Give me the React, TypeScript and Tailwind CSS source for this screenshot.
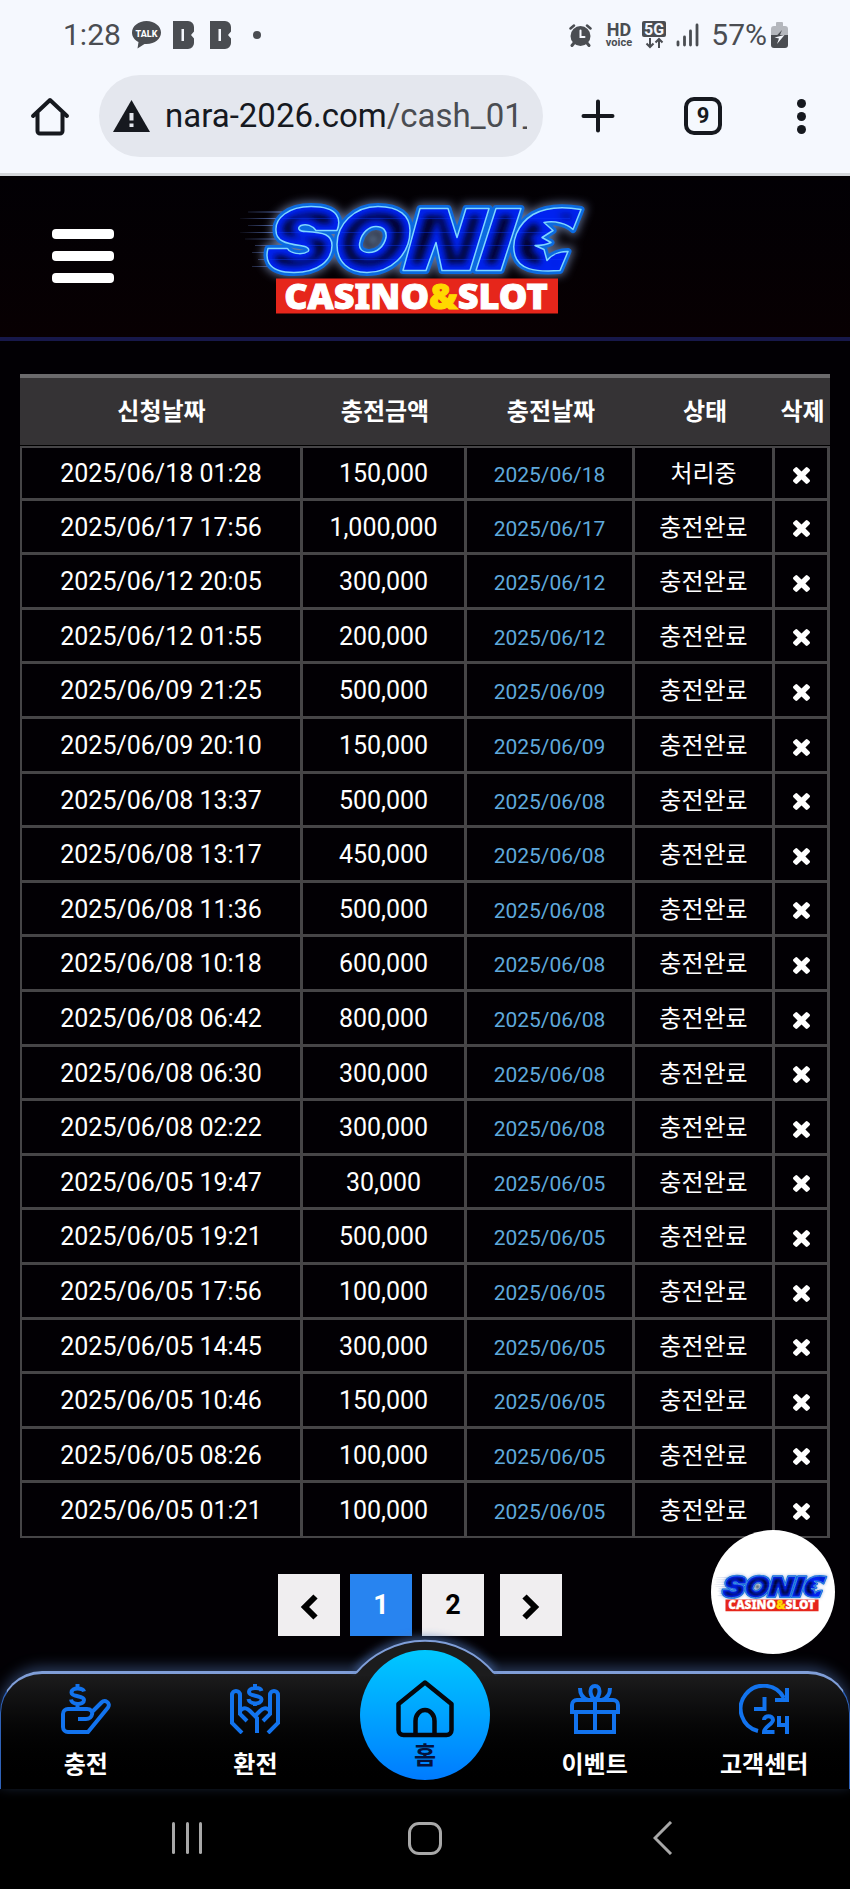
import React from 'react';

type Deposit = {
  requested: string;
  amount: string;
  paid: string;
  status: string;
};

const done = '충전완료';

const deposits: Deposit[] = [
  { requested: '2025/06/18 01:28', amount: '150,000', paid: '2025/06/18', status: '처리중' },
  { requested: '2025/06/17 17:56', amount: '1,000,000', paid: '2025/06/17', status: done },
  { requested: '2025/06/12 20:05', amount: '300,000', paid: '2025/06/12', status: done },
  { requested: '2025/06/12 01:55', amount: '200,000', paid: '2025/06/12', status: done },
  { requested: '2025/06/09 21:25', amount: '500,000', paid: '2025/06/09', status: done },
  { requested: '2025/06/09 20:10', amount: '150,000', paid: '2025/06/09', status: done },
  { requested: '2025/06/08 13:37', amount: '500,000', paid: '2025/06/08', status: done },
  { requested: '2025/06/08 13:17', amount: '450,000', paid: '2025/06/08', status: done },
  { requested: '2025/06/08 11:36', amount: '500,000', paid: '2025/06/08', status: done },
  { requested: '2025/06/08 10:18', amount: '600,000', paid: '2025/06/08', status: done },
  { requested: '2025/06/08 06:42', amount: '800,000', paid: '2025/06/08', status: done },
  { requested: '2025/06/08 06:30', amount: '300,000', paid: '2025/06/08', status: done },
  { requested: '2025/06/08 02:22', amount: '300,000', paid: '2025/06/08', status: done },
  { requested: '2025/06/05 19:47', amount: '30,000', paid: '2025/06/05', status: done },
  { requested: '2025/06/05 19:21', amount: '500,000', paid: '2025/06/05', status: done },
  { requested: '2025/06/05 17:56', amount: '100,000', paid: '2025/06/05', status: done },
  { requested: '2025/06/05 14:45', amount: '300,000', paid: '2025/06/05', status: done },
  { requested: '2025/06/05 10:46', amount: '150,000', paid: '2025/06/05', status: done },
  { requested: '2025/06/05 08:26', amount: '100,000', paid: '2025/06/05', status: done },
  { requested: '2025/06/05 01:21', amount: '100,000', paid: '2025/06/05', status: done },
];

const StatusBar: React.FC = () => (
  <div className="flex h-[70px] items-center justify-between pl-[63px] pr-[62px] text-[30px] leading-none text-[#4a4d52]">
    <div className="flex items-center">
      <span>1:28</span>
      <svg className="ml-[11px] h-7 w-[29px]" viewBox="0 0 29 28">
        <path d="M14.500 0C6.500 0 0 5.200 0 11.500c0 4 2.500 7.500 6.500 9.600L5.500 27.500l7-4.600c10 .8 16.500-4.900 16.500-11.400C29 5.200 22.500 0 14.500 0z" fill="#4a4d52" />
        <text x="14.500" y="15.500" textAnchor="middle" fontSize="9" fontWeight="800" fill="#fff">TALK</text>
      </svg>
      <BandIcon className="ml-3" />
      <BandIcon className="ml-4" />
      <span className="ml-[22px] h-2 w-2 rounded-full bg-[#4a4d52]" />
    </div>
    <div className="flex items-center">
      <svg className="h-[23px] w-[23px]" viewBox="0 0 23 23" stroke="#4a4d52" fill="none" strokeLinecap="round">
        <circle cx="11.500" cy="12" r="10" fill="#4a4d52" stroke="none" />
        <path d="M1.500 4.500 5 1.500M21.500 4.500 18 1.500" strokeWidth="2.500" />
        <path d="m5 19-2 2.500M18 19l2 2.500" strokeWidth="3" />
        <path d="M11.500 6.500V13h4" stroke="#f5f8fe" strokeWidth="2" />
      </svg>
      <svg className="ml-3 h-10 w-[30px]" viewBox="0 0 30 40" fill="#4a4d52">
        <text x="15" y="21" textAnchor="middle" fontSize="18" fontWeight="700">HD</text>
        <text x="15" y="31" textAnchor="middle" fontSize="11" fontWeight="700">voice</text>
      </svg>
      <svg className="ml-2 h-10 w-6" viewBox="0 0 24 40">
        <rect y="6" width="24" height="16" rx="2" fill="#4a4d52" />
        <text x="12" y="19.500" textAnchor="middle" fontSize="16" fontWeight="700" fill="#f5f8fe">5G</text>
        <path d="M8 23v9m-3.500-3.500L8 32l3.500-3.500M17 33v-9m-3.500 3.500L17 24l3.500 3.500" stroke="#4a4d52" strokeWidth="2" fill="none" />
      </svg>
      <svg className="ml-2.5 h-6 w-[23px]" viewBox="0 0 23 24" stroke="#4a4d52" strokeWidth="2.800" strokeLinecap="round">
        <path d="M2 19v3M8.500 14v8M14.500 8v14M21 2v20" />
      </svg>
      <span className="ml-3">57%</span>
      <svg className="ml-1 h-[26px] w-[17px]" viewBox="0 0 17 26">
        <path d="M5 1a1 1 0 0 1 1-1h5a1 1 0 0 1 1 1v3h2a3 3 0 0 1 3 3v6H0V7a3 3 0 0 1 3-3h2z" fill="#b4b7bd" />
        <path d="M0 13h17v10a3 3 0 0 1-3 3H3a3 3 0 0 1-3-3z" fill="#4a4d52" />
        <path d="M11 8 4 15.500h4z" fill="#4a4d52" />
        <path d="M3.500 15.500 13.500 13 6 22l2-5.500z" fill="#f5f8fe" />
      </svg>
    </div>
  </div>
);

const BandIcon: React.FC<{ className: string }> = ({ className }) => (
  <svg className={`${className} h-7 w-[21px]`} viewBox="0 0 21 28">
    <path d="M0 0h15a6 6 0 0 1 6 6v4.500L18 14l3 3.500V22a6 6 0 0 1-6 6H0z" fill="#4a4d52" />
    <path d="M8.500 8h2.500v12H8.500z" fill="#f5f8fe" />
  </svg>
);

const BrowserBar: React.FC = () => (
  <div className="flex items-center border-b-[3px] border-[#d3d6da] pb-4 pl-[30px] pr-[42px] pt-[5px]">
    <button aria-label="홈페이지" className="h-10 w-10 shrink-0">
      <svg viewBox="0 0 40 40" fill="none" stroke="#16191f" strokeWidth="4" strokeLinecap="round" strokeLinejoin="round">
        <path d="M3 20 20 4l17 16M7.500 17v18a2.500 2.500 0 0 0 2.500 2.500h20a2.500 2.500 0 0 0 2.500-2.500V17" />
      </svg>
    </button>
    <div className="ml-[29px] flex h-[82px] min-w-0 flex-1 items-center rounded-full bg-[#e4e7ee] pl-3.5 pr-4">
      <svg className="h-8 w-[37px] shrink-0" viewBox="0 0 37 32">
        <path d="M18.500 0 37 32H0z" fill="#16191f" />
        <path d="M16.500 13h4v7.500h-4zM16.500 23.500h4V27h-4z" fill="#e4e7ee" />
      </svg>
      <div className="ml-[15px] min-w-0 flex-1 overflow-hidden whitespace-nowrap text-[33px] leading-[44px] text-[#16191f]">
        nara-2026.com<span className="text-[#4a4d52]">/cash_01_</span>
      </div>
    </div>
    <button aria-label="새 탭" className="ml-[38px] h-[34px] w-[34px] shrink-0">
      <svg viewBox="0 0 34 34" stroke="#16191f" strokeWidth="4" strokeLinecap="round">
        <path d="M17 2.500v29M2.500 17h29" />
      </svg>
    </button>
    <button aria-label="탭 9개" className="ml-[69px] h-[38px] w-[38px] shrink-0 rounded-[10px] border-4 border-[#16191f] text-[22px] font-bold leading-[30px] text-[#16191f]">
      9
    </button>
    <button aria-label="메뉴" className="ml-[73px] flex w-[13px] shrink-0 flex-col items-center gap-1">
      <span className="h-[9px] w-[9px] rounded-full bg-[#16191f]" />
      <span className="h-[9px] w-[9px] rounded-full bg-[#16191f]" />
      <span className="h-[9px] w-[9px] rounded-full bg-[#16191f]" />
    </button>
  </div>
);

// The five letters of the word mark, drawn on a 400 x 150 canvas
const wordMark =
  'M117 50C121 40 120 26 91 26C68 26 55 38 56 50C56 60 65 63 80 65C88 66 90 69 88 71C84 74 74 74 69 70C68 69 68 68 67 68H48C46 75 44 92 74 92C98 92 112 80 112 65C112 54 104 52 86 51C78 51 77 47 81 45C86 43 93 45 96 50Z' +
  'M158 26C134 26 117 44 117 64C117 82 129 92 147 92C171 92 190 74 190 50C190 35 179 26 158 26ZM156 46C163 46 167 50 166 57C164 66 157 72 149 72C142 72 138 68 140 61C142 52 149 46 156 46Z' +
  'M200 28H228L237 57L246 28H269L250 90H222L216 62L206 90H183Z' +
  'M276 28H301L281 90H256Z' +
  'M361 29C344 26 327 26 313 34C297 44 291 61 295 75C299 88 313 92 340 90L348 71C339 71 333 73 327 80L324 69L315 65C321 65 327 64 331 62L322 57L333 50L324 42C335 40 347 43 353 49Z';

const SonicLogo: React.FC<{ id: string; className: string }> = ({ id, className }) => (
  <svg className={className} viewBox="0 0 400 150" role="img" aria-label="SONIC CASINO&SLOT">
    <defs>
      <linearGradient id={`${id}-speed`} gradientUnits="userSpaceOnUse" x1="20" x2="60" y1="0" y2="0">
        <stop offset="0" stopColor="#4b5a8c" stopOpacity="0.100" />
        <stop offset="1" stopColor="#5d7fd0" />
      </linearGradient>
      <clipPath id={`${id}-letters`}>
        <path d={wordMark} clipRule="evenodd" />
      </clipPath>
      <filter id={`${id}-glow`} x="-20%" y="-40%" width="140%" height="180%">
        <feGaussianBlur stdDeviation="5" />
      </filter>
      <filter id={`${id}-inner`}>
        <feGaussianBlur stdDeviation="3" />
      </filter>
    </defs>
    <path d={wordMark} fill="#8fa6d8" stroke="#8fa6d8" strokeWidth="9" filter={`url(#${id}-glow)`} opacity="0.700" />
    <path d="M28 31.500h34M20 38h40M28 45h30M20 52h40M25 58.500h34M35 65h30M32 72h20M38 79h14M32 86h20" stroke={`url(#${id}-speed)`} strokeWidth="1" />
    <path d={wordMark} fill="#0b6ae0" stroke="#0b6ae0" strokeWidth="7" strokeLinejoin="round" />
    <path d={wordMark} fill="#02042a" fillRule="evenodd" />
    <g clipPath={`url(#${id}-letters)`}>
      <path d={wordMark} fill="none" stroke="#0020f0" strokeWidth="14" filter={`url(#${id}-inner)`} />
      <path d="M50 38h300M50 52h300M50 65h300M50 79h300" stroke="#0a3cff" strokeWidth="1" opacity="0.400" />
    </g>
    <ellipse cx="153" cy="59" rx="7" ry="7" fill="#4d5f78" filter={`url(#${id}-inner)`} />
    <path d={wordMark} fill="none" stroke="#7fd6ff" strokeWidth="1.500" strokeLinejoin="round" />
    <path d="M56 98h282v35H56z" fill="#e6261b" />
    <text x="196" y="128" textAnchor="middle" fontFamily="Noto Sans, Open Sans" fontSize="36" fontWeight="900" fill="#fff" stroke="#fff" strokeWidth="1">
      CASINO<tspan fill="#ffd800" stroke="#ffd800">&amp;</tspan>SLOT
    </text>
  </svg>
);

const Header: React.FC = () => (
  <header className="grid grid-cols-[1fr_auto_1fr] items-center border-b-4 border-[#17184a] bg-gradient-to-b from-[#020004] to-[#080002] pb-[5px] pt-[3px]">
    <button aria-label="메뉴 열기" className="ml-[52px] flex w-[62px] flex-col gap-3">
      <span className="h-2.5 w-full rounded-sm bg-white" />
      <span className="h-2.5 w-full rounded-sm bg-white" />
      <span className="h-2.5 w-full rounded-sm bg-white" />
    </button>
    <a href="#home" className="block">
      <SonicLogo id="head" className="-ml-2.5 h-[153px] w-[400px]" />
    </a>
  </header>
);

const CloseIcon: React.FC = () => (
  <svg className="mx-auto h-[17px] w-[17px]" viewBox="110 366 1188 1188" fill="#fff">
    <path d="M1298 1322q0 40-28 68l-136 136q-28 28-68 28t-68-28l-294-294-294 294q-28 28-68 28t-68-28l-136-136q-28-28-28-68t28-68l294-294-294-294q-28-28-28-68t28-68l136-136q28-28 68-28t68 28l294 294 294-294q28-28 68-28t68 28l136 136q28 28 28 68t-28 68l-294 294 294 294q28 28 28 68z" />
  </svg>
);

const cell = 'border-[#464547] border-b-[3px] border-r-[3px] px-0 pb-0 group-first:border-t-2 group-last:border-b-2';

const DepositTable: React.FC = () => (
  <table className="w-full table-fixed border-separate border-spacing-0 text-center text-white">
    <colgroup>
      <col className="w-[283px]" />
      <col className="w-[164px]" />
      <col className="w-[168px]" />
      <col className="w-[140px]" />
      <col className="w-[55px]" />
    </colgroup>
    <thead>
      <tr className="h-[72px] text-2xl leading-8">
        {['신청날짜', '충전금액', '충전날짜', '상태', '삭제'].map((title) => (
          <th key={title} scope="col" className="whitespace-nowrap border-b border-t-4 border-b-black border-t-[#6b6a6c] bg-[#353335] p-0 font-bold">
            {title}
          </th>
        ))}
      </tr>
    </thead>
    <tbody>
      {deposits.map((row) => (
        <tr key={row.requested} className="group h-[55px] nth-[5n+2]:h-[54px] nth-[5n+4]:h-[54px]">
          <td className={`${cell} border-l-2 pt-0.5 text-[25px] leading-8`}>{row.requested}</td>
          <td className={`${cell} pt-0.5 text-[25px] leading-8`}>{row.amount}</td>
          <td className={`${cell} pt-1 text-[21px] leading-8 text-[#5fa9dc]`}>{row.paid}</td>
          <td className={`${cell} pt-0.5 text-2xl leading-8`}>{row.status}</td>
          <td className={`${cell} border-r-2 pt-1`}>
            <button aria-label={`${row.requested} 삭제`} className="block w-full">
              <CloseIcon />
            </button>
          </td>
        </tr>
      ))}
    </tbody>
  </table>
);

const pageBox = 'mr-2.5 flex h-[62px] w-[62px] items-center justify-center text-[27px] font-bold leading-8';

const Pagination: React.FC = () => (
  <nav aria-label="페이지" className="flex justify-center">
    <a href="#prev" aria-label="이전" className={`${pageBox} bg-[#f0eef0]`}>
      <svg className="mt-1 h-[26px] w-[18px]" viewBox="0 0 18 26" fill="none" stroke="#000" strokeWidth="6">
        <path d="M15.500 2.500 5 13l10.500 10.500" />
      </svg>
    </a>
    <a href="#1" aria-current="page" className={`${pageBox} bg-[#2884f0] text-white`}>1</a>
    <a href="#2" className={`${pageBox} bg-[#f0eef0] text-black`}>2</a>
    <a href="#next" aria-label="다음" className={`${pageBox} ml-1.5 bg-[#f0eef0]`}>
      <svg className="mt-1 h-[26px] w-[18px]" viewBox="0 0 18 26" fill="none" stroke="#000" strokeWidth="6">
        <path d="M2.500 2.500 13 13 2.500 23.500" />
      </svg>
    </a>
  </nav>
);

const tabs = [
  {
    label: '충전',
    icon: (
      <>
        <path d="M23 7.500C22 3.500 10.500 3 10.500 8.500c0 5 12.500 2.500 12.500 7.500 0 5.500-12 5-13-.5M16.500 0v4M16.500 19v5" />
        <path d="M17 35h8c7 0 9-10 1-10H7a5 5 0 0 0-5 5v13a5 5 0 0 0 5 5h20l20-24.500c3-4.500-3-8.500-6.500-5L30 29" />
      </>
    ),
  },
  {
    label: '환전',
    icon: (
      <>
        <path d="M31.500 7C30.500 3 19 3 19 8c0 5 12.500 2.500 12.500 7.500 0 5.500-12 5-13-.5M25 0v4M25 18v4" />
        <path d="M12 49 2 39V11c0-5.500 8-5.500 8 0v19l7 7M10 27c4-5 8-2 10 0l7 7v15M38 49 48 39V11c0-5.500-8-5.500-8 0v19l-7 7M40 27c-4-5-8-2-10 0l-4 4" />
      </>
    ),
  },
  { label: '홈', icon: null },
  {
    label: '이벤트',
    icon: (
      <>
        <path d="M2 28v-7a5 5 0 0 1 5-5h36a5 5 0 0 1 5 5v7zM6 28v20h38V28M25 16v32" />
        <path d="M25 16c-6-5-6-14 0-14s6 9 0 14zM18 16c-6-2-8-6-8-12M32 16c6-2 8-6 8-12" />
      </>
    ),
  },
  {
    label: '고객센터',
    icon: (
      <>
        <path d="M19 47A23 23 0 1 1 45 14M36 16h12V4M25.500 13v12H15" />
        <path d="M25 36c0-5 9-5 9 0 0 4-9 7-9 12h10.500M40 32v9h9M48 32v18" />
      </>
    ),
  },
];

const BottomTabs: React.FC = () => (
  <nav aria-label="하단 메뉴" className="relative grid h-[118px] grid-cols-5 rounded-t-[42px] border-x border-t-[3px] border-x-[#2f62b8] border-t-[#7f9ed8] bg-gradient-to-b from-[#1c1c1d] to-black shadow-[0_-4px_14px_rgba(90,130,200,0.45)]">
    <svg className="absolute -top-12 left-1/2 h-[50px] w-[180px] -translate-x-1/2" viewBox="0 0 180 50">
      <defs>
        <filter id="bump-glow" x="-20%" y="-60%" width="140%" height="220%">
          <feGaussianBlur stdDeviation="5" />
        </filter>
      </defs>
      <path d="M22 46A90 90 0 0 1 158 46" fill="none" stroke="#4a6fb0" strokeWidth="6" filter="url(#bump-glow)" />
      <path d="M20 50 22 46A90 90 0 0 1 158 46L160 50z" fill="#1c1c1d" />
      <path d="M21 47A90 90 0 0 1 159 47" fill="none" stroke="#7f9ed8" strokeWidth="2" />
    </svg>
    {tabs.map((tab) =>
      tab.icon ? (
        <a key={tab.label} href={`#${tab.label}`} className="flex flex-col items-center pt-2.5 text-2xl font-bold leading-8 text-white">
          <svg className="mb-[15px] h-[50px] w-[50px]" viewBox="0 0 50 50" fill="none" stroke="#1273ee" strokeWidth="4">
            {tab.icon}
          </svg>
          {tab.label}
        </a>
      ) : (
        <div key={tab.label} className="flex justify-center">
          <a href="#home" className="relative -mt-6 flex h-[130px] w-[130px] shrink-0 flex-col items-center rounded-full bg-gradient-to-b from-[#00c8ff] to-[#007bff] pt-[30px] text-2xl font-bold leading-8 text-[#05123c]">
            <svg className="mb-0.5 h-[58px] w-[58px]" viewBox="0 0 58 58" fill="none" stroke="#05070c" strokeWidth="4.500" strokeLinejoin="round">
              <path d="M2.500 24 29 2.500 55.500 24v26a5 5 0 0 1-5 5h-43a5 5 0 0 1-5-5zM19.500 55V41a9.500 11 0 0 1 19 0v14" />
            </svg>
            {tab.label}
          </a>
        </div>
      ),
    )}
  </nav>
);

const SystemBar: React.FC = () => (
  <div className="grid h-[100px] grid-cols-3 items-center justify-items-center bg-black px-[68px] pb-0.5">
    <button aria-label="최근 앱" className="flex w-[30px] justify-between">
      <span className="h-8 w-[3px] rounded-full bg-[#a8a8a8]" />
      <span className="h-8 w-[3px] rounded-full bg-[#a8a8a8]" />
      <span className="h-8 w-[3px] rounded-full bg-[#a8a8a8]" />
    </button>
    <button aria-label="홈 화면" className="h-[33px] w-[34px] rounded-[11px] border-[3px] border-[#a8a8a8]" />
    <button aria-label="뒤로" className="h-[34px] w-5">
      <svg viewBox="0 0 20 34" fill="none" stroke="#a8a8a8" strokeWidth="3">
        <path d="M18 1 2 17l16 16" />
      </svg>
    </button>
  </div>
);

export default function App() {
  return (
    <div className="bg-[#020004] font-[Roboto,'Noto_Sans_CJK_KR',sans-serif]">
      <div className="bg-[#f5f8fe]">
        <StatusBar />
        <BrowserBar />
      </div>
      <Header />
      <main className="relative px-5 pb-[35px] pt-[33px]">
        <DepositTable />
        <div className="mt-9">
          <Pagination />
        </div>
        <a href="#chat" className="absolute bottom-[17px] right-[15px] flex h-[124px] w-[124px] items-center justify-center rounded-full bg-white">
          <SonicLogo id="chat" className="h-[50px] w-[132px] shrink-0" />
        </a>
      </main>
      <BottomTabs />
      <SystemBar />
    </div>
  );
}
